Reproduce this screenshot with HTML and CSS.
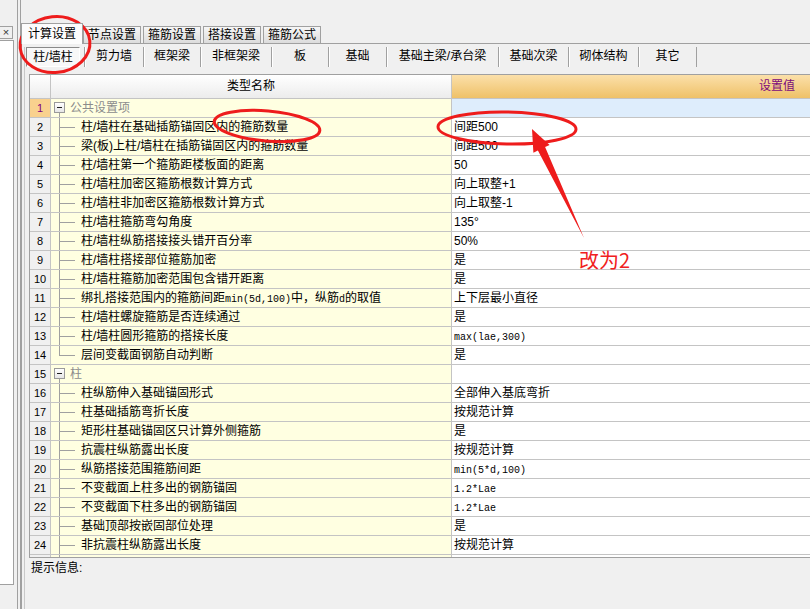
FILE: index.html
```html
<!DOCTYPE html>
<html lang="zh-CN">
<head>
<meta charset="utf-8">
<title>计算设置</title>
<link rel="stylesheet" href="styles.css">
</head>
<body>
<div class="app">
  <aside class="side">
    <div class="close">×</div>
    <div class="list"></div>
  </aside>
  <div class="split"></div>
  <main class="main">
    <div class="tabs">
      <div class="tab active">计算设置</div>
      <div class="tab first">节点设置</div>
      <div class="tab">箍筋设置</div>
      <div class="tab">搭接设置</div>
      <div class="tab">箍筋公式</div>
    </div>
    <div class="panel">
      <div class="inner">
        <div class="subtabs">
          <div class="sub sel">柱/墙柱</div>
          <div class="sub w59">剪力墙</div>
          <div class="sub w57">框架梁</div>
          <div class="sub w71">非框架梁</div>
          <div class="sub w57">板</div>
          <div class="sub w58">基础</div>
          <div class="sub w112">基础主梁/承台梁</div>
          <div class="sub w70">基础次梁</div>
          <div class="sub w70">砌体结构</div>
          <div class="sub w59 end">其它</div>
        </div>
        <div class="grid">
          <div class="row head"><div class="c num"></div><div class="c name">类型名称</div><div class="c val">设置值</div></div>
          <div class="row cur"><div class="c num">1</div><div class="c name grp"><span class="box"></span>公共设置项</div><div class="c val"></div></div>
          <div class="row"><div class="c num">2</div><div class="c name ch">柱/墙柱在基础插筋锚固区内的箍筋数量</div><div class="c val">间距500</div></div>
          <div class="row"><div class="c num">3</div><div class="c name ch">梁(板)上柱/墙柱在插筋锚固区内的箍筋数量</div><div class="c val">间距500</div></div>
          <div class="row"><div class="c num">4</div><div class="c name ch">柱/墙柱第一个箍筋距楼板面的距离</div><div class="c val">50</div></div>
          <div class="row"><div class="c num">5</div><div class="c name ch">柱/墙柱加密区箍筋根数计算方式</div><div class="c val">向上取整+1</div></div>
          <div class="row"><div class="c num">6</div><div class="c name ch">柱/墙柱非加密区箍筋根数计算方式</div><div class="c val">向上取整-1</div></div>
          <div class="row"><div class="c num">7</div><div class="c name ch">柱/墙柱箍筋弯勾角度</div><div class="c val">135°</div></div>
          <div class="row"><div class="c num">8</div><div class="c name ch">柱/墙柱纵筋搭接接头错开百分率</div><div class="c val">50%</div></div>
          <div class="row"><div class="c num">9</div><div class="c name ch">柱/墙柱搭接部位箍筋加密</div><div class="c val">是</div></div>
          <div class="row"><div class="c num">10</div><div class="c name ch">柱/墙柱箍筋加密范围包含错开距离</div><div class="c val">是</div></div>
          <div class="row"><div class="c num">11</div><div class="c name ch">绑扎搭接范围内的箍筋间距<span class="m">min(5d,100)</span>中，纵筋<span class="m">d</span>的取值</div><div class="c val">上下层最小直径</div></div>
          <div class="row"><div class="c num">12</div><div class="c name ch">柱/墙柱螺旋箍筋是否连续通过</div><div class="c val">是</div></div>
          <div class="row"><div class="c num">13</div><div class="c name ch">柱/墙柱圆形箍筋的搭接长度</div><div class="c val"><span class="m">max(lae,300)</span></div></div>
          <div class="row"><div class="c num">14</div><div class="c name ch last">层间变截面钢筋自动判断</div><div class="c val">是</div></div>
          <div class="row"><div class="c num">15</div><div class="c name grp"><span class="box"></span>柱</div><div class="c val"></div></div>
          <div class="row"><div class="c num">16</div><div class="c name ch">柱纵筋伸入基础锚固形式</div><div class="c val">全部伸入基底弯折</div></div>
          <div class="row"><div class="c num">17</div><div class="c name ch">柱基础插筋弯折长度</div><div class="c val">按规范计算</div></div>
          <div class="row"><div class="c num">18</div><div class="c name ch">矩形柱基础锚固区只计算外侧箍筋</div><div class="c val">是</div></div>
          <div class="row"><div class="c num">19</div><div class="c name ch">抗震柱纵筋露出长度</div><div class="c val">按规范计算</div></div>
          <div class="row"><div class="c num">20</div><div class="c name ch">纵筋搭接范围箍筋间距</div><div class="c val"><span class="m">min(5*d,100)</span></div></div>
          <div class="row"><div class="c num">21</div><div class="c name ch">不变截面上柱多出的钢筋锚固</div><div class="c val"><span class="m">1.2*Lae</span></div></div>
          <div class="row"><div class="c num">22</div><div class="c name ch">不变截面下柱多出的钢筋锚固</div><div class="c val"><span class="m">1.2*Lae</span></div></div>
          <div class="row"><div class="c num">23</div><div class="c name ch">基础顶部按嵌固部位处理</div><div class="c val">是</div></div>
          <div class="row"><div class="c num">24</div><div class="c name ch">非抗震柱纵筋露出长度</div><div class="c val">按规范计算</div></div>
          <div class="row"><div class="c num"></div><div class="c name ch"></div><div class="c val"></div></div>
        </div>
        <div class="hint">提示信息:</div>
      </div>
    </div>
  </main>
</div>
<svg class="marks" width="810" height="609" viewBox="0 0 810 609">
  <g fill="none" stroke="#ee1c1c" stroke-width="3">
    <ellipse cx="55" cy="44.5" rx="35" ry="28" transform="rotate(-6 55 44.5)"/>
    <ellipse cx="267" cy="126" rx="53" ry="15" transform="rotate(5 267 126)"/>
    <ellipse cx="507" cy="128" rx="69" ry="16" transform="rotate(1 507 128)"/>
  </g>
  <polygon fill="#ee1c1c" points="532,129 549.6,144.9 545.1,147.1 584,238 537.9,150.5 533.4,152.7"/>
  <text x="579" y="268" class="note">改为2</text>
</svg>
</body>
</html>
```
FILE: styles.css
```css
html, body {
  margin: 0;
  height: 100%;
}
body {
  background: #f0f0f0;
  font: 12px/1 "Liberation Sans", "Noto Sans CJK SC", sans-serif;
  color: #000;
  overflow: hidden;
  position: relative;
}
.app {
  display: flex;
  height: 609px;
}
.side {
  width: 14px;
  flex: none;
  padding-top: 26px;
  box-sizing: border-box;
}
.close {
  width: 13px;
  height: 13px;
  box-sizing: border-box;
  border: 1px solid #a0a0a0;
  border-left: none;
  font-size: 11px;
  line-height: 11px;
  text-align: center;
  color: #333;
}
.list {
  margin-top: 1px;
  height: 545px;
  background: #fff;
  border: 1px solid #a0a0a0;
  border-left: none;
  box-sizing: border-box;
}
.split {
  width: 4px;
  flex: none;
  margin-left: 3px;
  border-left: 1px solid #a0a0a0;
  border-right: 1px solid #a0a0a0;
  box-sizing: border-box;
}
.main {
  flex: 1;
  min-width: 0;
  overflow: hidden;
  display: flex;
  flex-direction: column;
}
.tabs {
  display: flex;
  align-items: flex-end;
  height: 43px;
  flex: none;
}
.tab {
  width: 58px;
  height: 17px;
  box-sizing: border-box;
  margin-left: 2px;
  border: 1px solid #a0a0a0;
  border-bottom: none;
  background: linear-gradient(#f6f6f6, #dcdcdc);
  text-align: center;
  line-height: 16px;
}
.tab.first {
  margin-left: 0;
}
.tab.active {
  width: 62px;
  height: 21px;
  margin-left: 0;
  margin-bottom: -1px;
  line-height: 20px;
  background: #fcfcfc;
  position: relative;
  z-index: 1;
}
.panel {
  flex: 1;
  border-top: 1px solid #a0a0a0;
  border-left: 1px solid #a0a0a0;
}
.inner {
  height: 100%;
  margin-left: 2px;
  border-left: 1px solid #c8c8c8;
}
.subtabs {
  display: flex;
  margin-top: 3px;
  padding-left: 1px;
  height: 20px;
}
.sub {
  box-sizing: border-box;
  height: 20px;
  line-height: 19px;
  text-align: center;
  border-left: 1px solid #a0a0a0;
  box-shadow: inset 1px 0 #fff;
}
.sub.sel {
  width: 54px;
  border: 1px solid;
  border-color: #8a8a8a #fff #fff #8a8a8a;
  background: #f8f8f8;
  margin-right: 4px;
  box-shadow: none;
  line-height: 18px;
}
.sub.end { border-right: 1px solid #a0a0a0; }
.w57 { width: 57px; }
.w58 { width: 58px; }
.w59 { width: 59px; }
.w70 { width: 70px; }
.w71 { width: 71px; }
.w112 { width: 112px; }

.grid {
  margin: 7px 0 0 4px;
  width: 784px;
  height: 484px;
  box-sizing: border-box;
  border: 1px solid #a0a0a0;
  border-right: none;
  overflow: hidden;
}
.row {
  display: grid;
  grid-template-columns: 21px 401px 1fr;
  height: 19px;
  box-sizing: border-box;
  border-bottom: 1px solid #c4c4c4;
}
.c {
  box-sizing: border-box;
  border-right: 1px solid #c4c4c4;
  line-height: 18px;
  white-space: nowrap;
  overflow: hidden;
}
.num {
  background: #f0f0f0;
  text-align: center;
  font-size: 11px;
}
.name {
  background: #ffffe1;
  padding-left: 30px;
}
.val {
  background: #fff;
  padding-left: 2px;
}
.m {
  font-family: "Liberation Mono", monospace;
  font-size: 10px;
}
.head {
  height: 24px;
}
.head .c {
  line-height: 23px;
}
.head .num,
.head .name {
  background: linear-gradient(#ffffff, #ececec);
}
.head .name {
  text-align: center;
  padding-left: 0;
}
.head .val {
  background: linear-gradient(#fbe0aa, #efc168);
  text-align: right;
  padding-right: 17px;
  color: #7c0a7c;
}
.cur .num {
  background: #f9d18e;
  color: #800080;
}
.cur .val {
  background: #deedfc;
}
.ch {
  background:
    linear-gradient(#a0a0a0, #a0a0a0) 8px 0 / 1px 100% no-repeat,
    linear-gradient(#a0a0a0, #a0a0a0) 8px 9px / 16px 1px no-repeat,
    #ffffe1;
}
.ch.last {
  background:
    linear-gradient(#a0a0a0, #a0a0a0) 8px 0 / 1px 10px no-repeat,
    linear-gradient(#a0a0a0, #a0a0a0) 8px 9px / 16px 1px no-repeat,
    #ffffe1;
}
.grp {
  padding-left: 3px;
  color: #8c8c8c;
  background:
    linear-gradient(#a0a0a0, #a0a0a0) 8px 14px / 1px 4px no-repeat,
    #ffffe1;
}
.box {
  display: inline-block;
  width: 11px;
  height: 11px;
  box-sizing: border-box;
  border: 1px solid #9a9a9a;
  background:
    linear-gradient(#202020, #202020) center / 5px 1px no-repeat,
    linear-gradient(#ffffff, #e6e6e6);
  vertical-align: -1px;
  margin-right: 5px;
}
.hint {
  margin: 2px 0 0 6px;
  line-height: 16px;
}
.marks {
  position: absolute;
  left: 0;
  top: 0;
  pointer-events: none;
}
.note {
  fill: #f02020;
  font-family: "Noto Sans CJK SC", sans-serif;
  font-size: 20px;
}
```
